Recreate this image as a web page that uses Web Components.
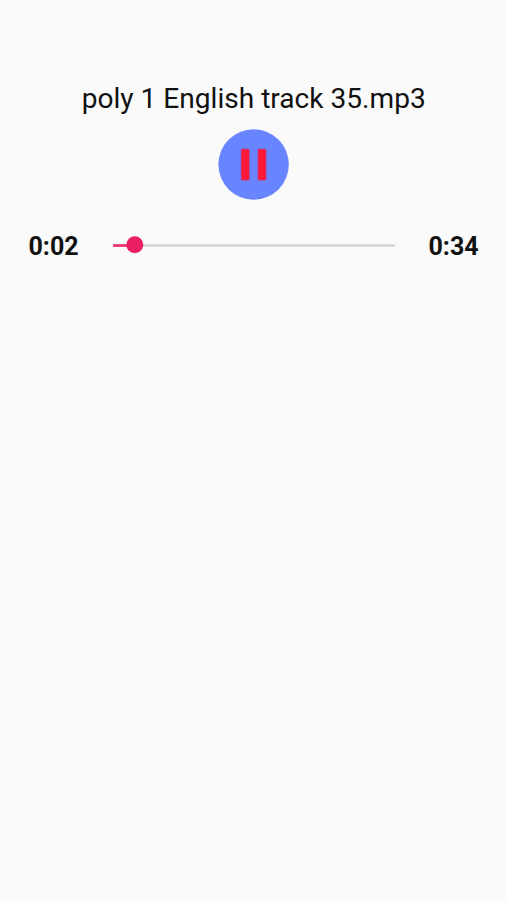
<!DOCTYPE html>
<html lang="en">
<head>
  <meta charset="UTF-8">
  <meta name="viewport" content="width=device-width, initial-scale=1.0">
  <title>Audio player</title>
  <style>
    body {
      margin: 0;
      min-height: 100vh;
      background: #fafafa;
      color: #111;
      font-family: Roboto, sans-serif;
    }
  </style>
</head>
<body>
  <audio-player>
    <span slot="title">poly 1 English track 35.mp3</span>
    <pause-button slot="control"></pause-button>
    <time-label slot="elapsed">0:02</time-label>
    <seek-bar slot="seek" value="22.3" max="282"></seek-bar>
    <time-label slot="duration">0:34</time-label>
  </audio-player>

  <script>
    class PauseButton extends HTMLElement {
      constructor() {
        super();
        this.attachShadow({ mode: "open" });

        this.shadowRoot.innerHTML = `
          <style>
            :host {
              display: block;
              width: 72px;
              height: 72px;
            }

            button {
              display: block;
              width: 100%;
              height: 100%;
              padding: 0;
              border: none;
              background: none;
            }

            svg {
              display: block;
            }
          </style>

          <button aria-label="Pause">
            <svg width="72" height="72" viewBox="0 0 72 72">
              <circle cx="36.6" cy="35.5" r="35.2" fill="#6884ff"/>
              <g fill="#ff1938" stroke="#d62a62" stroke-width="0.8">
                <rect x="24.3" y="20.2" width="7.8" height="30.8" rx="0.8"/>
                <rect x="41.1" y="20.2" width="7.8" height="30.8" rx="0.8"/>
              </g>
            </svg>
          </button>
        `;
      }
    }

    class TimeLabel extends HTMLElement {
      constructor() {
        super();
        this.attachShadow({ mode: "open" });

        this.shadowRoot.innerHTML = `
          <style>
            :host {
              display: block;
              font-size: 25px;
              font-weight: 700;
              line-height: 30px;
              white-space: nowrap;
            }
          </style>

          <slot></slot>
        `;
      }
    }

    class SeekBar extends HTMLElement {
      constructor() {
        super();
        this.attachShadow({ mode: "open" });

        const value = Number(this.getAttribute("value")) || 0;
        const max = Number(this.getAttribute("max")) || 100;

        this.shadowRoot.innerHTML = `
          <style>
            :host {
              display: block;
            }

            .track {
              position: relative;
              height: 3px;
              background: #d9d9d9;
            }

            .progress {
              width: ${(value / max) * 100}%;
              height: 100%;
              background: #ec407a;
            }

            .thumb {
              position: absolute;
              top: 50%;
              left: ${(value / max) * 100}%;
              width: 17.4px;
              height: 17.4px;
              border-radius: 50%;
              background: #e91e63;
              transform: translate(-50%, -50%);
            }
          </style>

          <div class="track">
            <div class="progress"></div>
            <div class="thumb"></div>
          </div>
        `;
      }
    }

    class AudioPlayer extends HTMLElement {
      constructor() {
        super();
        this.attachShadow({ mode: "open" });

        this.shadowRoot.innerHTML = `
          <style>
            :host {
              display: flex;
              flex-direction: column;
              align-items: center;
              box-sizing: border-box;
              padding-top: 82px;
              overflow: hidden;
            }

            .title {
              padding-left: 1.4px;
              font-size: 28.1px;
              line-height: 33px;
              white-space: nowrap;
            }

            .control {
              margin-top: 14px;
            }

            .seek-row {
              display: grid;
              grid-template-columns: 50px 282px 50px;
              column-gap: 34px;
              align-items: center;
              margin-top: 31px;
              padding-left: 1px;
            }

            ::slotted(seek-bar) {
              margin-bottom: 4px;
            }
          </style>

          <div class="title"><slot name="title"></slot></div>
          <div class="control"><slot name="control"></slot></div>
          <div class="seek-row">
            <slot name="elapsed"></slot>
            <slot name="seek"></slot>
            <slot name="duration"></slot>
          </div>
        `;
      }
    }

    customElements.define("pause-button", PauseButton);
    customElements.define("time-label", TimeLabel);
    customElements.define("seek-bar", SeekBar);
    customElements.define("audio-player", AudioPlayer);
  </script>
</body>
</html>
